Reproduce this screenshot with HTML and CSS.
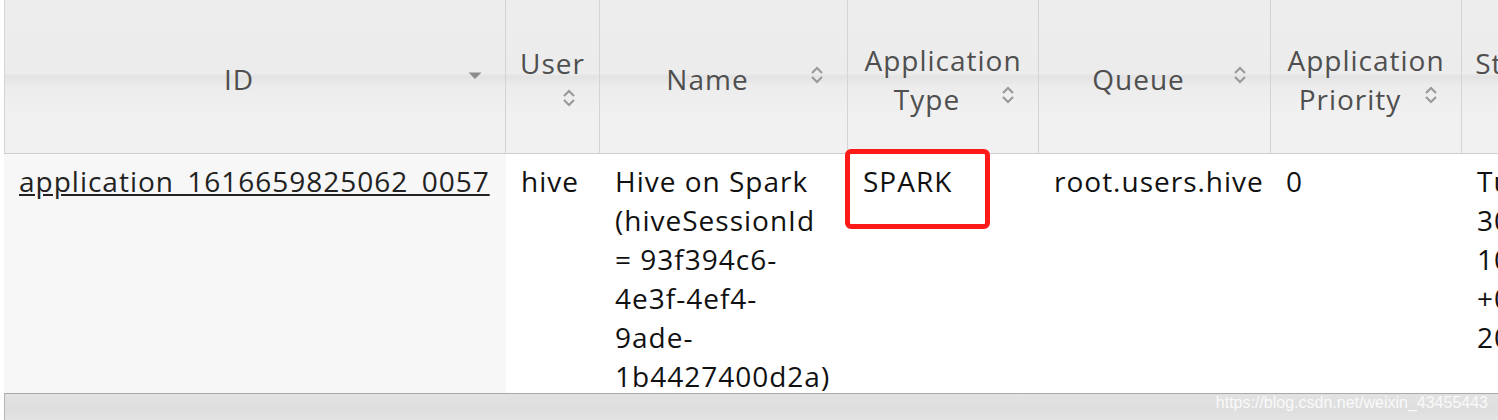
FILE: index.html
```html
<!DOCTYPE html>
<html>
<head>
<meta charset="utf-8">
<link rel="stylesheet" href="styles.css">
</head>
<body>
<div class="page">
  <div class="scroll">
    <table class="apps">
      <thead>
        <tr>
          <th class="c-id first">ID<span class="sort"><svg width="16" height="24" viewBox="0 0 16 24"><path d="M1.5 9.5 L14.5 9.5 L8 16 Z" fill="#8c8c8c"/></svg></span></th>
          <th class="c-user">User<span class="sort"><svg width="16" height="24" viewBox="0 0 16 24"><path d="M3 10 L8 5 L13 10 M3 14 L8 19 L13 14" fill="none" stroke="#9a9a9a" stroke-width="2.2"/></svg></span></th>
          <th class="c-name">Name<span class="sort"><svg width="16" height="24" viewBox="0 0 16 24"><path d="M3 10 L8 5 L13 10 M3 14 L8 19 L13 14" fill="none" stroke="#9a9a9a" stroke-width="2.2"/></svg></span></th>
          <th class="c-type">Application Type<span class="sort"><svg width="16" height="24" viewBox="0 0 16 24"><path d="M3 10 L8 5 L13 10 M3 14 L8 19 L13 14" fill="none" stroke="#9a9a9a" stroke-width="2.2"/></svg></span></th>
          <th class="c-queue">Queue<span class="sort"><svg width="16" height="24" viewBox="0 0 16 24"><path d="M3 10 L8 5 L13 10 M3 14 L8 19 L13 14" fill="none" stroke="#9a9a9a" stroke-width="2.2"/></svg></span></th>
          <th class="c-prio">Application Priority<span class="sort"><svg width="16" height="24" viewBox="0 0 16 24"><path d="M3 10 L8 5 L13 10 M3 14 L8 19 L13 14" fill="none" stroke="#9a9a9a" stroke-width="2.2"/></svg></span></th>
          <th class="c-start">StartTime<span class="sort"><svg width="16" height="24" viewBox="0 0 16 24"><path d="M3 10 L8 5 L13 10 M3 14 L8 19 L13 14" fill="none" stroke="#9a9a9a" stroke-width="2.2"/></svg></span></th>
        </tr>
      </thead>
      <tbody>
        <tr>
          <td class="sorted"><a href="#">application_1616659825062_0057</a></td>
          <td>hive</td>
          <td>Hive on Spark (hiveSessionId = 93f394c6-4e3f-4ef4-9ade-1b4427400d2a)</td>
          <td class="marked">SPARK<span class="highlight"></span></td>
          <td>root.users.hive</td>
          <td>0</td>
          <td>Tue Mar 30 10:39:44 +0800 2021</td>
        </tr>
      </tbody>
    </table>
  </div>
  <div class="footer-bar">
    <span class="watermark">https://blog.csdn.net/weixin_43455443</span>
  </div>
</div>
</body>
</html>
```

FILE: styles.css
```css
html, body {
  margin: 0;
  padding: 0;
  background: #ffffff;
}

.page {
  width: 1498px;
  height: 420px;
  overflow: hidden;
  position: relative;
  font-family: "Open Sans", "Noto Sans", sans-serif;
}

.scroll {
  height: 393px;
  overflow: hidden;
  padding-left: 4px;
}

.apps {
  table-layout: fixed;
  border-collapse: separate;
  border-spacing: 0;
  width: 1621px;
  font-size: 28px;
  letter-spacing: 1px;
  line-height: 39px;
}

.apps th {
  box-sizing: border-box;
  height: 154px;
  padding: 6px 10px 0 10px;
  vertical-align: middle;
  text-align: center;
  font-weight: normal;
  color: #4f4f4f;
  border-right: 1px solid #d4d4d4;
  border-bottom: 1px solid #cfcfcf;
  background: linear-gradient(to bottom, #ededed 0%, #ececec 48%, #e3e3e3 50%, #ececec 56%, #f0f0f0 70%, #f1f1f1 100%);
}

.apps th.first {
  border-left: 1px solid #d4d4d4;
}

.sort {
  float: right;
  width: 16px;
  height: 24px;
  margin: 3px 12px 6px 4px;
}

.sort svg {
  display: block;
}

.c-id { width: 502px; }
.c-user { width: 94px; }
.c-name { width: 248px; }
.c-type { width: 191px; }
.c-queue { width: 232px; }
.c-prio { width: 191px; }
.c-start { width: 163px; }

.apps td {
  box-sizing: border-box;
  padding: 8px 15px 8px 15px;
  vertical-align: top;
  text-align: left;
  color: #111111;
}

.apps td.sorted {
  background: #f7f7f7;
}

.apps td a {
  color: #222222;
  text-decoration: underline;
}

.marked {
  position: relative;
}

.highlight {
  position: absolute;
  left: -3px;
  top: -5px;
  width: 145px;
  height: 80px;
  box-sizing: border-box;
  border: 5px solid #ff1a1a;
  border-radius: 6px;
}

.footer-bar {
  height: 27px;
  margin-left: 4px;
  box-sizing: border-box;
  border-top: 1px solid #a9a9a9;
  border-left: 1px solid #b5b5b5;
  background: linear-gradient(to bottom, #e2e2e2 0%, #dedede 60%, #e4e4e4 100%);
  position: relative;
}

.watermark {
  position: absolute;
  right: 10px;
  top: -2px;
  font-family: "Liberation Sans", Arial, sans-serif;
  font-size: 16px;
  line-height: 22px;
  color: rgba(255, 255, 255, 0.85);
}
```
